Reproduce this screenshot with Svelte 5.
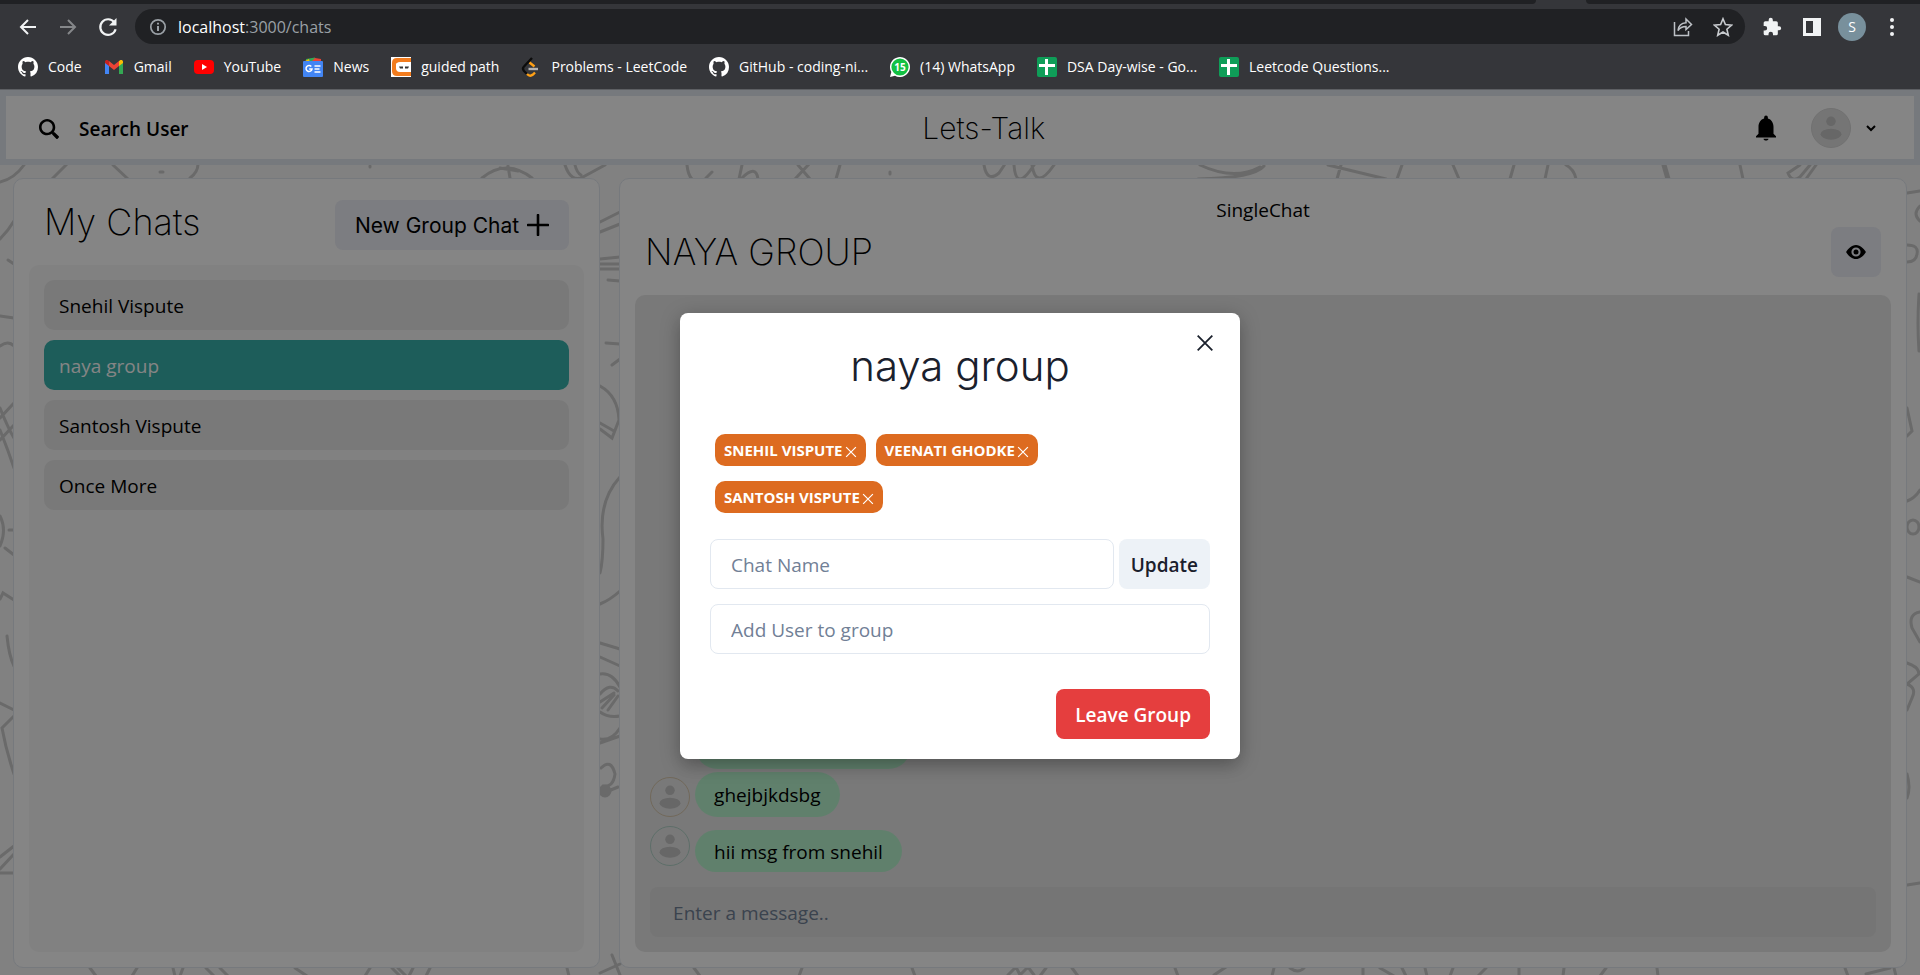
<script>
  const bookmarks = [
    { icon: 'github', label: 'Code' },
    { icon: 'gmail', label: 'Gmail' },
    { icon: 'youtube', label: 'YouTube' },
    { icon: 'news', label: 'News' },
    { icon: 'ninja', label: 'guided path' },
    { icon: 'leet', label: 'Problems - LeetCode' },
    { icon: 'github', label: 'GitHub - coding-ni...' },
    { icon: 'whatsapp', label: '(14) WhatsApp' },
    { icon: 'sheet', label: 'DSA Day-wise - Go...' },
    { icon: 'sheet', label: 'Leetcode Questions...' }
  ];
  const chats = ['Snehil Vispute', 'naya group', 'Santosh Vispute', 'Once More'];
  let selected = $state('naya group');
  const members = ['SNEHIL VISPUTE', 'VEENATI GHODKE', 'SANTOSH VISPUTE'];
  let chatName = $state('');
  let userQuery = $state('');
  let message = $state('');
</script>

{#snippet person()}
  <svg viewBox="0 0 40 40" aria-hidden="true">
    <ellipse cx="20" cy="13" rx="5" ry="5" fill="#c5c5c5" />
    <ellipse cx="20" cy="26.500" rx="11" ry="5.800" fill="#c5c5c5" />
  </svg>
{/snippet}

{#snippet cross(size, width)}
  <svg width={size} height={size} viewBox="0 0 16 16" fill="none" stroke="currentColor" stroke-width={width} aria-hidden="true">
    <path d="M1.500 1.500l13 13M14.500 1.500l-13 13" />
  </svg>
{/snippet}

<div class="window">
  <header class="browser">
    <div class="tabs"><span class="tab-left"></span><span class="tab-right"></span></div>
    <div class="toolbar">
      <button class="tool" aria-label="Back">
        <svg width="20" height="20" viewBox="0 0 20 20" fill="none" stroke="#f1f3f4" stroke-width="2"><path d="M18 10H3M10 3l-7 7 7 7" /></svg>
      </button>
      <button class="tool" aria-label="Forward">
        <svg width="20" height="20" viewBox="0 0 20 20" fill="none" stroke="#85878a" stroke-width="2"><path d="M2 10h15M10 3l7 7-7 7" /></svg>
      </button>
      <button class="tool" aria-label="Reload">
        <svg width="20" height="20" viewBox="0 0 20 20"><path d="M16.300 5.300A7.800 7.800 0 1 0 17.600 12.200" fill="none" stroke="#f1f3f4" stroke-width="2.200" /><path d="M18.500 1v7.500H11z" fill="#f1f3f4" /></svg>
      </button>
      <div class="address">
        <svg width="18" height="18" viewBox="0 0 18 18" fill="none" stroke="#9aa0a6" stroke-width="1.700"><circle cx="9" cy="9" r="7.200" /><path d="M9 8v5M9 4.800v1.800" stroke-width="2" /></svg>
        <span class="url"><b>localhost</b>:3000/chats</span>
        <button class="mini" aria-label="Share">
          <svg width="20" height="20" viewBox="0 0 20 20" fill="none" stroke="#bdc1c6" stroke-width="1.500"><path d="M1.500 5v13.500h14V14M5 13.500c.5-5 3.500-7.500 8-7.800V2l5.500 5.500-5.500 5V9.500C9.500 9.500 7 10.500 5 13.500z" /></svg>
        </button>
        <button class="mini" aria-label="Bookmark">
          <svg width="20" height="20" viewBox="0 0 20 20" fill="none" stroke="#c8cbcf" stroke-width="1.600"><path d="M10 1.800l2.400 5.800 6.200.5-4.700 4.100 1.400 6.100L10 15l-5.300 3.300 1.400-6.100L1.400 8.100l6.200-.5z" /></svg>
        </button>
      </div>
      <div class="actions">
        <button class="act" aria-label="Extensions">
          <svg width="20" height="20" viewBox="0 0 24 24" fill="#f1f3f4"><path d="M20.500 11H19V7a2 2 0 0 0-2-2h-4V3.500a2.500 2.500 0 0 0-5 0V5H4a2 2 0 0 0-2 2v3.800h1.500a2.700 2.700 0 0 1 0 5.400H2V20a2 2 0 0 0 2 2h3.800v-1.500a2.700 2.700 0 0 1 5.400 0V22H17a2 2 0 0 0 2-2v-4h1.500a2.500 2.500 0 0 0 0-5z" /></svg>
        </button>
        <button class="act" aria-label="Side panel">
          <svg width="20" height="20" viewBox="0 0 20 20"><path d="M1 1h18v18H1z" fill="#f1f3f4" /><path d="M4 4h7v12H4z" fill="#35363a" /></svg>
        </button>
        <button class="profile" aria-label="Profile">S</button>
        <button class="act" aria-label="Menu">
          <svg width="20" height="20" viewBox="0 0 20 20" fill="#f1f3f4"><circle cx="10" cy="3" r="2" /><circle cx="10" cy="10" r="2" /><circle cx="10" cy="17" r="2" /></svg>
        </button>
      </div>
    </div>
    <nav class="bookmarks" aria-label="Bookmarks">
      {#each bookmarks as b}
        <a href="#top">
          {#if b.icon === 'github'}
            <svg width="20" height="20" viewBox="0 0 16 16" fill="#fff"><path d="M8 0C3.580 0 0 3.580 0 8c0 3.540 2.290 6.530 5.470 7.590.4.070.55-.17.55-.38 0-.19-.01-.82-.01-1.490-2.010.37-2.530-.49-2.690-.94-.09-.23-.48-.94-.82-1.130-.28-.15-.68-.52-.01-.53.63-.01 1.080.58 1.230.82.72 1.210 1.870.87 2.330.66.07-.52.28-.87.51-1.070-1.780-.2-3.640-.89-3.640-3.950 0-.87.31-1.590.82-2.150-.08-.2-.36-1.020.08-2.120 0 0 .67-.21 2.200.82.64-.18 1.320-.27 2-.27s1.360.09 2 .27c1.530-1.040 2.200-.82 2.200-.82.44 1.100.16 1.920.08 2.120.51.56.82 1.270.82 2.150 0 3.070-1.870 3.750-3.650 3.950.29.25.54.73.54 1.480 0 1.070-.01 1.930-.01 2.200 0 .21.15.46.55.38A8.010 8.010 0 0 0 16 8c0-4.420-3.580-8-8-8z" /></svg>
          {:else if b.icon === 'gmail'}
            <svg width="20" height="20" viewBox="0 0 20 20"><path d="M1 5v12h4V8z" fill="#4285f4" /><path d="M19 5v12h-4V8z" fill="#34a853" /><path d="M1 6V4.500C1 3 3 2.500 4.200 3.400L5 4v5z" fill="#c5221f" /><path d="M19 6V4.500C19 3 17 2.500 15.800 3.400L15 4v5z" fill="#fbbc04" /><path d="M5 4l5 4 5-4v5l-5 4-5-4z" fill="#ea4335" /></svg>
          {:else if b.icon === 'youtube'}
            <svg width="20" height="20" viewBox="0 0 20 20"><rect x="0" y="3" width="20" height="14" rx="4" fill="#f00" /><path d="M8 7l5 3-5 3z" fill="#fff" /></svg>
          {:else if b.icon === 'news'}
            <svg width="20" height="20" viewBox="0 0 20 20"><path d="M3 2l9-1.500 1 5H3z" fill="#34a853" /><path d="M2 4l4-2 1 4H2z" fill="#fbbc04" /><path d="M12 1l6 1v4H7z" fill="#ea4335" /><rect y="4" width="20" height="16" rx="1" fill="#4285f4" /><path d="M8.300 9.500A3 3 0 1 0 9 12H6.200M11.500 9h6M11.500 12h5M11.500 15h6" fill="none" stroke="#fff" stroke-width="1.500" /></svg>
          {:else if b.icon === 'ninja'}
            <svg width="20" height="20" viewBox="0 0 20 20"><path d="M0 0h20v20H0z" fill="#fff" /><path d="M20 1H6Q1 1 1 6v8q0 5 5 5h14v-4H9q-4 0-4-4V9q0-4 4-4h11z" fill="#f27c1e" /><path d="M5 6.500h15v7H9q-4 0-4-4z" fill="#fff" /><path d="M8 9.500h4v2H9zM14 9.500h4l-1 2h-3z" fill="#333" /></svg>
          {:else if b.icon === 'leet'}
            <svg width="20" height="20" viewBox="0 0 20 20" fill="none" stroke-width="2.400"><path d="M11 1L3 9.500Q1 11.500 3 14l3 3" stroke="#0c0c0c" /><path d="M8.500 5.500l5 4M6 17q3 3 6 .5l2-2" stroke="#ffa116" /><path d="M7.500 12H17" stroke="#b3b3b3" /></svg>
          {:else if b.icon === 'whatsapp'}
            <svg width="20" height="20" viewBox="0 0 20 20"><path d="M0 20l1.300-5A10 10 0 1 1 5 18.700z" fill="#fff" /><circle cx="10" cy="10" r="8.600" fill="#12c143" /><text x="10" y="13.500" font-size="10" font-weight="700" text-anchor="middle" fill="#fff">15</text></svg>
          {:else}
            <svg width="20" height="20" viewBox="0 0 20 20"><rect width="20" height="20" rx="2" fill="#0f9d58" /><path d="M8 2h3v16H8zM2 7h16v3H2z" fill="#fff" /></svg>
          {/if}
          <span>{b.label}</span>
        </a>
      {/each}
    </nav>
  </header>

  <div class="page">
    <svg class="doodles" viewBox="0 0 1920 885" preserveAspectRatio="none" aria-hidden="true">
      <g fill="none" stroke="#cbcbcb" stroke-width="3" stroke-linecap="round">
        <path d="M0 92Q14 89 24 75M52 89l16-16M113 75l15 14M160 82h3M190 88q8-6 8-14M370 76v1M482 88q24-20 50 0M508 76l2 12M500 78l18 3M565 75q6 18 18 12l22-12M575 75q2 8 6 10" />
        <path d="M687 75q1 10 5 14M706 88l6-6M742 75l-3 14M742 88q14-14 16 1M795 89l15-16M798 75l12 14M840 75l-4 14M890 82v2M984 75q3 18 15 8l6-9M1014 75q2 28 20 0M1032 75q4 26 22 0M1200 75q34 16 60 2M1264 76q-10 12-66 13" />
        <path d="M1341 75l-4 14M1328 75l58 14M1402 75l-5 14M1453 75l6 14M1514 75l-4 14M1548 75l-3 14M1566 75q8 4 10 14M1740 75l3 14M1816 75l-10 14M1800 75l-12 8q4 10 12 4l10-12" />
        <path d="M1664 75l4 14" stroke-width="5" />
        <path d="M0 149q8-8 14-18M8 170l6 4M0 226l14 2M0 256q8-6 14 0M0 328l14-15M0 350l14-15M0 318q8 20 14 30M0 340q8 20 14 38M0 426q7 14 0 30M9 440h4M5 458l9 7M0 509l3-6 11 7M7 546q2 20 7 30M0 613l14 7M14 626L2 638q4 22 12 46M0 767l14-11M0 779l14-15M0 783h14" />
        <path d="M600 132l20-10M600 142l20-8M600 169l20-2M600 174h20M600 179h20M608 190l12 1M606 253l14 1M612 275l8-6M600 296q18 10 19 34l-7 18-12-9M600 333l14 8M620 387q-22 24-17 62 0 22-3 34M600 514q10-4 20-13M600 553l20 6M600 567l20 9M600 584q12-2 20 13M600 604q10-12 18-3M600 612l14-9M602 618l12-13M608 620l10-14M600 622q8 6 20 4M600 649q12 2 20-11M600 653l20-7M601 678q10-10 14 6-2 14-12 12M606 702l12-5M612 865l8 20M600 883l20-9" />
        <ellipse cx="605" cy="701" rx="5" ry="5" fill="#cbcbcb" />
        <path d="M1907 103l13-2M1920 116q-8 8 0 15M1907 155q12 0 10 9-1 8-10 8M1919 204q-2 30 0 57M1907 318l5 23-5 5M1907 411q8-3 13-11M1907 487l13 5M1920 522q-12 2-8 16l8 14M1907 573q12 4 12 11l-12 10q10 4 5 14l-5 12M1907 684q4 14 0 24M1907 795l13-2" />
        <ellipse cx="1913" cy="437" rx="6" ry="7" />
        <path d="M90 878l6 8M137 878l-5 8M173 878l2 8M183 878l-3 8M206 878l8 8M220 878l8 8M295 878l12 8M370 878l-5 8M392 878l8 8M398 878l8 8M413 878l-4 8M430 878l-4 8M567 878l2 8M694 878l6 8M802 878l-3 8M912 878l3 8M1008 885l8-8 4 8 8-8 6 8M1046 878l-6 8M1072 878l6 8M1175 878l3 8M1214 885l12-8M1274 878l-2 8M1290 878q8 6 14 0M1363 878v8M1380 878l14 8M1402 878l4 8M1425 878l2 8M1453 878l-3 8M1486 878l-8 8M1519 878v8M1564 878l-1 8M1606 878l-6 8M1657 878l1 8M1845 878l3 8M1866 884l24-6M1894 878l2 8" />
      </g>
    </svg>

    <div class="nav">
      <button class="search">
        <svg width="20" height="20" viewBox="0 0 512 512" aria-hidden="true"><path fill="currentColor" d="M505 442.700L405.300 343c-4.500-4.500-10.600-7-17-7H372c27.600-35.300 44-79.700 44-128C416 93.100 322.900 0 208 0S0 93.100 0 208s93.100 208 208 208c48.300 0 92.700-16.400 128-44v16.300c0 6.400 2.500 12.500 7 17l99.700 99.700c9.400 9.400 24.600 9.400 33.900 0l28.300-28.300c9.400-9.400 9.400-24.600.1-34zM208 350c-78 0-142-64-142-142S130 66 208 66s142 64 142 142-64 142-142 142z" /></svg>
        <span>Search User</span>
      </button>
      <h1>Lets-Talk</h1>
      <div class="user">
        <button aria-label="Notifications">
          <svg width="30" height="30" viewBox="0 0 24 24" fill="currentColor"><path d="M12 22c1.100 0 2-.6 2-1.500h-4c0 .9.900 1.500 2 1.500zM20 18.500v1H4v-1l2-2V11c0-3.300 1.700-6 4.500-6.700V3.500a1.500 1.500 0 0 1 3 0v.8C16.300 5 18 7.700 18 11v5.500z" /></svg>
        </button>
        <button class="account" aria-label="Account">
          <span class="avatar big">{@render person()}</span>
          <svg width="10" height="10" viewBox="0 0 10 10" fill="none" stroke="currentColor" stroke-width="2"><path d="M1 3l4 4 4-4" /></svg>
        </button>
      </div>
    </div>

    <main class="panels">
      <section class="panel left">
        <div class="head">
          <h2>My Chats</h2>
          <button class="new">New Group Chat
            <svg width="22" height="22" viewBox="0 0 22 22" fill="none" stroke="currentColor" stroke-width="2.600" stroke-linecap="round" aria-hidden="true"><path d="M11 1v20M1 11h20" /></svg>
          </button>
        </div>
        <div class="list">
          {#each chats as c}
            <button class:on={c === selected} onclick={() => (selected = c)}>{c}</button>
          {/each}
        </div>
      </section>

      <section class="panel right">
        <div class="crumb">SingleChat</div>
        <div class="head">
          <h2>NAYA GROUP</h2>
          <button class="eye" aria-label="Group details">
            <svg width="20" height="20" viewBox="0 0 24 24" fill="currentColor"><path fill-rule="evenodd" d="M23.400 11C21.800 8.600 17.600 3.500 12 3.500S2.200 8.600.6 11a1.900 1.900 0 0 0 0 2C2.200 15.400 6.400 20.500 12 20.500s9.800-5.100 11.400-7.500a1.900 1.900 0 0 0 0-2zM12 17.500a5.500 5.500 0 1 1 0-11 5.500 5.500 0 0 1 0 11z" /><circle cx="12" cy="12" r="3" /></svg>
          </button>
        </div>
        <div class="chat">
          <div class="messages">
            <div class="msg"><span class="bubble first">you are naya group</span></div>
            <div class="msg"><span class="avatar amber">{@render person()}</span><span class="bubble">ghejbjkdsbg</span></div>
            <div class="msg last"><span class="avatar teal">{@render person()}</span><span class="bubble">hii msg from snehil</span></div>
          </div>
          <input class="entry" aria-label="Message" placeholder="Enter a message.." bind:value={message} />
        </div>
      </section>
    </main>

    <div class="overlay">
      <div class="modal" role="dialog" aria-modal="true" aria-labelledby="modal-title">
        <button class="close" aria-label="Close">{@render cross(18, 1.6)}</button>
        <h3 id="modal-title">naya group</h3>
        <div class="badges">
          {#each members as m}
            <span class="badge">{m}<button aria-label="Remove {m}">{@render cross(12, 1.6)}</button></span>
          {/each}
        </div>
        <div class="rename">
          <input aria-label="Chat Name" placeholder="Chat Name" bind:value={chatName} />
          <button class="update">Update</button>
        </div>
        <input aria-label="Add User to group" placeholder="Add User to group" bind:value={userQuery} />
        <button class="leave">Leave Group</button>
      </div>
    </div>
  </div>
</div>

<style>
  :global(body) { margin: 0; background: #35363a; }
  * { box-sizing: border-box; }
  button { border: 0; background: none; padding: 0; font: inherit; color: inherit; cursor: pointer; }
  svg { display: block; flex: none; }
  h1, h2, h3 { margin: 0; font-family: Inter, "Liberation Sans", sans-serif; font-weight: 200; }

  .window { display: flex; flex-direction: column; min-height: 100vh; font-family: "Open Sans", "Noto Sans", sans-serif; }

  .browser { background: #35363a; border-bottom: 1px solid #5d5f63; color: #fff; }
  .tabs { display: flex; justify-content: space-between; height: 4px; }
  .tab-left { width: 80%; margin-right: 50px; background: #202124; border-bottom-right-radius: 8px; }
  .tab-right { flex: 1; background: #202124; border-bottom-left-radius: 8px; }
  .toolbar { display: flex; align-items: center; padding: 5px 18px 0; }
  .tool { margin-right: 20px; }
  .address { flex: 1; display: flex; align-items: center; height: 35px; padding: 0 12px 0 14px; border-radius: 18px; background: #202124; }
  .tool + .address { margin-left: -3px; }
  .url { flex: 1; margin-left: 11px; font-size: 16px; color: #9aa0a6; }
  .url b { font-weight: 400; color: #fff; }
  .mini + .mini { margin-left: 20px; }
  .actions { display: flex; align-items: center; gap: 16px; margin-left: 17px; }
  .act + .act { margin-left: 4px; }
  .profile { width: 28px; height: 28px; border-radius: 50%; background: #78909c; font-size: 14px; }
  .bookmarks { display: flex; gap: 22px; align-items: center; height: 45px; padding: 0 18px; font-size: 14px; }
  .bookmarks a { display: flex; align-items: center; gap: 10px; color: #fff; text-decoration: none; white-space: nowrap; }

  .page { position: relative; flex: 1; display: flex; flex-direction: column; background: #f7f7f7; color: #000; font-size: 19px; }
  .doodles { position: absolute; inset: 0; width: 100%; height: 100%; }
  .nav { position: relative; display: flex; justify-content: space-between; align-items: center; height: 75px; border: 6px solid #e2e8f0; background: #fff; padding: 0 24px 0 33px; }
  .search { display: flex; align-items: center; gap: 20px; padding: 2px 28px 0 0; font-weight: 600; }
  h1 { font-size: 30px; }
  .user { display: flex; align-items: center; gap: 30px; }
  .account { display: flex; align-items: center; gap: 15px; padding-right: 14px; }
  .avatar { width: 40px; height: 40px; border-radius: 50%; border: 1px solid #d8d8d8; flex: none; }
  .avatar svg { width: 100%; height: 100%; }
  .avatar.big { background: #e1e1e1; }
  .avatar.amber { border-color: #d9c8ad; }
  .avatar.teal { border-color: #b3d3c9; }

  .panels { position: relative; flex: 1; display: flex; justify-content: space-between; padding: 13px 13px 7px; }
  .panel { display: flex; flex-direction: column; border: 1px solid #e2e8f0; border-radius: 10px; background: #fff; padding: 15px; }
  .left { width: 31%; }
  .right { width: 68%; }
  .head { display: flex; justify-content: space-between; align-items: center; }
  .left .head { align-items: flex-start; padding: 6px 15px 15px; }
  h2 { font-size: 36px; line-height: 44px; }
  .new { display: flex; align-items: center; gap: 8px; height: 50px; padding: 0 20px; border-radius: 8px; background: #edeff7; font-family: Inter, sans-serif; font-size: 21px; font-weight: 400; }
  .list { flex: 1; display: flex; flex-direction: column; gap: 10px; padding: 15px; border-radius: 10px; background: #f8f8f8; }
  .list button { height: 50px; padding: 2px 15px 0; border-radius: 10px; background: #e8e8e8; text-align: left; }
  .list .on { background: #38b2ac; color: #fff; }
  .crumb { text-align: center; line-height: 32px; }
  .right .head { padding: 1px 10px 18px; }
  .eye { display: grid; place-items: center; width: 50px; height: 50px; border-radius: 8px; background: #edeff7; }
  .chat { flex: 1; display: flex; flex-direction: column; justify-content: flex-end; padding: 15px; border-radius: 10px; background: #e8e8e8; }
  .msg { display: flex; align-items: flex-end; gap: 5px; }
  .msg + .msg { margin-top: 3px; }
  .msg.last { margin-top: 9px; align-items: flex-start; }
  .msg.last .bubble { margin-top: 4px; height: 42px; line-height: 44px; }
  .bubble { height: 45px; padding: 0 19px; border-radius: 25px; background: #b9f5d0; line-height: 46px; }
  .bubble.first { margin-left: 45px; padding-right: 25px; }

  input { height: 50px; padding: 2px 20px 0; border: 1px solid #e2e8f0; border-radius: 8px; background: #fff; font: inherit; color: #1a202c; min-width: 0; }
  input::placeholder { color: #718096; opacity: 1; }
  .entry { width: 100%; margin-top: 15px; padding-left: 23px; border: 0; background: #e0e0e0; }

  .overlay { position: absolute; inset: 0; display: grid; place-items: center; padding-top: 7px; background: rgba(0, 0, 0, 0.48); color: #1a202c; }
  .modal { position: relative; display: flex; flex-direction: column; width: 560px; max-width: 100%; padding: 20px 30px; border-radius: 8px; background: #fff; box-shadow: 0 10px 15px -3px rgba(0, 0, 0, 0.1), 0 4px 20px rgba(0, 0, 0, 0.25); }
  .close { position: absolute; top: 21px; right: 26px; }
  h3 { font-size: 42px; font-weight: 300; line-height: 66px; text-align: center; }
  .badges { display: flex; flex-wrap: wrap; gap: 15px 10px; padding: 35px 100px 26px 5px; }
  .badge { display: flex; align-items: center; gap: 2px; height: 32px; padding: 0 9px; border-radius: 10px; background: #dd6b20; color: #fff; font-size: 15px; font-weight: 700; }
  .badge button { margin-top: 3px; }
  .rename { display: flex; gap: 5px; margin-bottom: 15px; }
  .rename input { flex: 1; }
  .update { padding: 2px 12px 0; border-radius: 8px; background: #edf2f7; font-weight: 600; }
  .leave { align-self: flex-end; height: 50px; margin-top: 35px; padding: 2px 19px 0; border-radius: 8px; background: #e53e3e; color: #fff; font-weight: 600; }
</style>
